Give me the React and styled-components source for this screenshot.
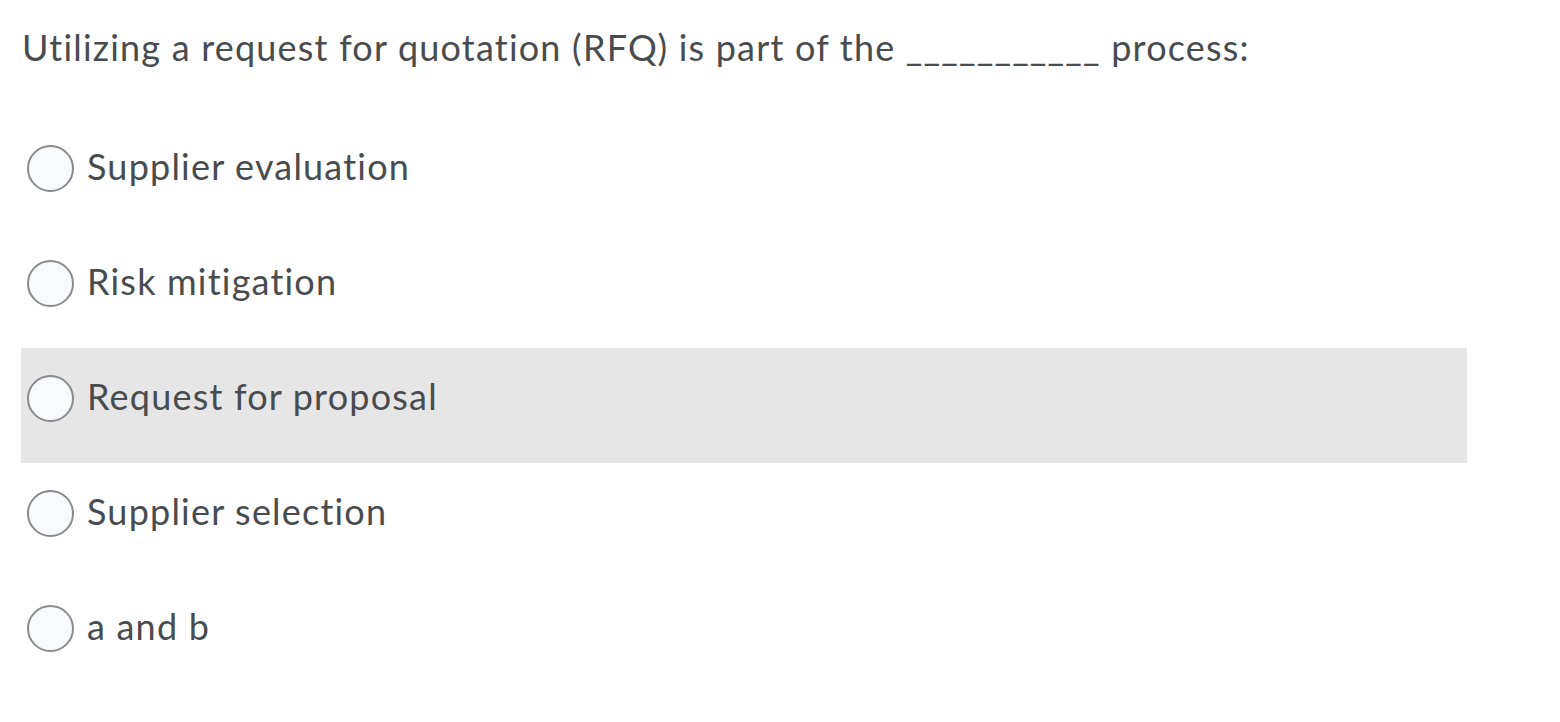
import React from "react";
import styled, { createGlobalStyle } from "styled-components";

const Global = createGlobalStyle`
  html, body { margin: 0; padding: 0; background: #fff; }
  body { font-family: Lato, "Noto Sans", sans-serif; color: #494c4e; }
`;

const Page = styled.div`
  width: 1560px;
  height: 722px;
  box-sizing: border-box;
  padding: 23px 0 0 21px;
`;

const Question = styled.div`
  font-size: 36px;
  letter-spacing: 1.2px;
  line-height: 48px;
  padding-left: 1px;
  margin-bottom: 47px;
`;

const Options = styled.div`
  display: flex;
  flex-direction: column;
  width: 1446px;
`;

const Row = styled.label`
  display: flex;
  align-items: flex-start;
  gap: 13px;
  height: 115px;
  box-sizing: border-box;
  padding: 27px 0 0 6px;
  background: ${(p) => (p.$active ? "#e6e6e6" : "transparent")};
`;

const Radio = styled.span`
  flex: none;
  width: 43px;
  height: 43px;
  border-radius: 50%;
  border: 2px solid #8a8a8a;
  background: #f9fafe;
`;

const Label = styled.span`
  font-size: 36px;
  letter-spacing: 1.2px;
  line-height: 43px;
`;

const options = [
  "Supplier evaluation",
  "Risk mitigation",
  "Request for proposal",
  "Supplier selection",
  "a and b",
];

export default function App() {
  return (
    <Page>
      <Global />
      <Question>
        Utilizing a request for quotation (RFQ) is part of the ___________ process:
      </Question>
      <Options>
        {options.map((o, i) => (
          <Row key={o} $active={i === 2}>
            <Radio />
            <Label>{o}</Label>
          </Row>
        ))}
      </Options>
    </Page>
  );
}
